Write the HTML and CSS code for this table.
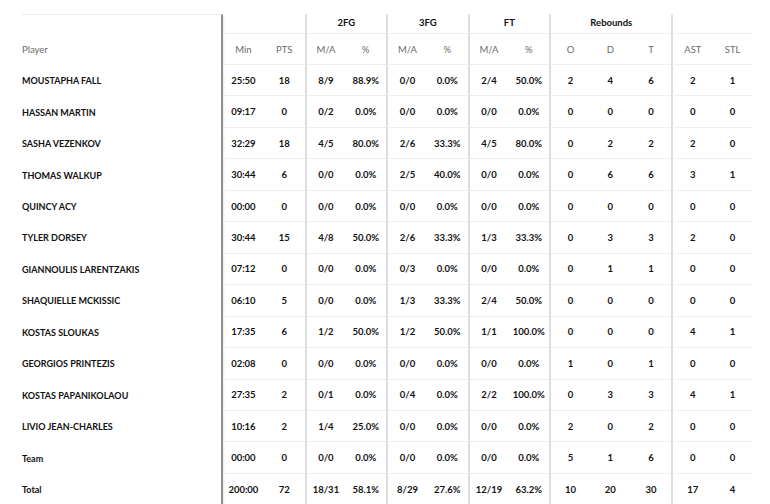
FILE: index.html
```html
<!DOCTYPE html>
<html>
<head>
<meta charset="utf-8">
<link rel="stylesheet" href="styles.css">
</head>
<body>
<table class="box">
  <colgroup>
    <col class="c-player">
    <col span="13" class="c-stat">
  </colgroup>
  <thead>
    <tr class="r-group">
      <th class="player top"></th>
      <th colspan="2"></th>
      <th colspan="2" class="sep grp">2FG</th>
      <th colspan="2" class="sep grp">3FG</th>
      <th colspan="2" class="sep grp">FT</th>
      <th colspan="3" class="sep grp">Rebounds</th>
      <th colspan="2" class="sep"></th>
    </tr>
    <tr class="r-head">
      <th class="player lab">Player</th>
      <th class="lab">Min</th><th class="lab">PTS</th>
      <th class="lab sep">M/A</th><th class="lab">%</th>
      <th class="lab sep">M/A</th><th class="lab">%</th>
      <th class="lab sep">M/A</th><th class="lab">%</th>
      <th class="lab sep">O</th><th class="lab">D</th><th class="lab">T</th>
      <th class="lab sep">AST</th><th class="lab">STL</th>
    </tr>
  </thead>
  <tbody>
    <tr><td class="player">MOUSTAPHA FALL</td><td>25:50</td><td>18</td><td class="sep">8/9</td><td>88.9%</td><td class="sep">0/0</td><td>0.0%</td><td class="sep">2/4</td><td>50.0%</td><td class="sep">2</td><td>4</td><td>6</td><td class="sep">2</td><td>1</td></tr>
    <tr><td class="player">HASSAN MARTIN</td><td>09:17</td><td>0</td><td class="sep">0/2</td><td>0.0%</td><td class="sep">0/0</td><td>0.0%</td><td class="sep">0/0</td><td>0.0%</td><td class="sep">0</td><td>0</td><td>0</td><td class="sep">0</td><td>0</td></tr>
    <tr><td class="player">SASHA VEZENKOV</td><td>32:29</td><td>18</td><td class="sep">4/5</td><td>80.0%</td><td class="sep">2/6</td><td>33.3%</td><td class="sep">4/5</td><td>80.0%</td><td class="sep">0</td><td>2</td><td>2</td><td class="sep">2</td><td>0</td></tr>
    <tr><td class="player">THOMAS WALKUP</td><td>30:44</td><td>6</td><td class="sep">0/0</td><td>0.0%</td><td class="sep">2/5</td><td>40.0%</td><td class="sep">0/0</td><td>0.0%</td><td class="sep">0</td><td>6</td><td>6</td><td class="sep">3</td><td>1</td></tr>
    <tr><td class="player">QUINCY ACY</td><td>00:00</td><td>0</td><td class="sep">0/0</td><td>0.0%</td><td class="sep">0/0</td><td>0.0%</td><td class="sep">0/0</td><td>0.0%</td><td class="sep">0</td><td>0</td><td>0</td><td class="sep">0</td><td>0</td></tr>
    <tr><td class="player">TYLER DORSEY</td><td>30:44</td><td>15</td><td class="sep">4/8</td><td>50.0%</td><td class="sep">2/6</td><td>33.3%</td><td class="sep">1/3</td><td>33.3%</td><td class="sep">0</td><td>3</td><td>3</td><td class="sep">2</td><td>0</td></tr>
    <tr><td class="player">GIANNOULIS LARENTZAKIS</td><td>07:12</td><td>0</td><td class="sep">0/0</td><td>0.0%</td><td class="sep">0/3</td><td>0.0%</td><td class="sep">0/0</td><td>0.0%</td><td class="sep">0</td><td>1</td><td>1</td><td class="sep">0</td><td>0</td></tr>
    <tr><td class="player">SHAQUIELLE MCKISSIC</td><td>06:10</td><td>5</td><td class="sep">0/0</td><td>0.0%</td><td class="sep">1/3</td><td>33.3%</td><td class="sep">2/4</td><td>50.0%</td><td class="sep">0</td><td>0</td><td>0</td><td class="sep">0</td><td>0</td></tr>
    <tr><td class="player">KOSTAS SLOUKAS</td><td>17:35</td><td>6</td><td class="sep">1/2</td><td>50.0%</td><td class="sep">1/2</td><td>50.0%</td><td class="sep">1/1</td><td>100.0%</td><td class="sep">0</td><td>0</td><td>0</td><td class="sep">4</td><td>1</td></tr>
    <tr><td class="player">GEORGIOS PRINTEZIS</td><td>02:08</td><td>0</td><td class="sep">0/0</td><td>0.0%</td><td class="sep">0/0</td><td>0.0%</td><td class="sep">0/0</td><td>0.0%</td><td class="sep">1</td><td>0</td><td>1</td><td class="sep">0</td><td>0</td></tr>
    <tr><td class="player">KOSTAS PAPANIKOLAOU</td><td>27:35</td><td>2</td><td class="sep">0/1</td><td>0.0%</td><td class="sep">0/4</td><td>0.0%</td><td class="sep">2/2</td><td>100.0%</td><td class="sep">0</td><td>3</td><td>3</td><td class="sep">4</td><td>1</td></tr>
    <tr><td class="player">LIVIO JEAN-CHARLES</td><td>10:16</td><td>2</td><td class="sep">1/4</td><td>25.0%</td><td class="sep">0/0</td><td>0.0%</td><td class="sep">0/0</td><td>0.0%</td><td class="sep">2</td><td>0</td><td>2</td><td class="sep">0</td><td>0</td></tr>
    <tr><td class="player">Team</td><td>00:00</td><td>0</td><td class="sep">0/0</td><td>0.0%</td><td class="sep">0/0</td><td>0.0%</td><td class="sep">0/0</td><td>0.0%</td><td class="sep">5</td><td>1</td><td>6</td><td class="sep">0</td><td>0</td></tr>
    <tr><td class="player">Total</td><td>200:00</td><td>72</td><td class="sep">18/31</td><td>58.1%</td><td class="sep">8/29</td><td>27.6%</td><td class="sep">12/19</td><td>63.2%</td><td class="sep">10</td><td>20</td><td>30</td><td class="sep">17</td><td>4</td></tr>
  </tbody>
</table>
</body>
</html>
```

FILE: styles.css
```css
html, body {
  margin: 0;
  padding: 0;
  background: #ffffff;
}
body {
  font-family: Lato, "Open Sans", sans-serif;
  color: #111111;
  overflow: hidden;
}
.box {
  margin: 14px 0 0 22px;
  width: 731px;
  table-layout: fixed;
  border-collapse: separate;
  border-spacing: 0;
}
.c-player { width: 201px; }
th, td {
  padding: 0;
  text-align: center;
  vertical-align: middle;
  font-size: 9.5px;
  font-weight: 700;
  white-space: nowrap;
  border-bottom: 1px solid #efefef;
}
.r-group { height: 20px; }
.r-head { height: 31px; }
tbody tr { height: 31.46px; }
.grp {
  font-weight: 700;
  color: #111;
  padding-bottom: 2px;
}
.lab {
  font-weight: 400;
  color: #6b6b6b;
}
.player {
  text-align: left;
  font-size: 9px;
  border-bottom: none;
  border-right: 2px solid #8e8e8e;
  box-shadow: 2px 0 2px -1px rgba(0,0,0,0.08);
}
.player.lab {
  font-size: 9.5px;
}
.player.top {
  border-top: 1px solid #ececec;
}
.sep {
  border-left: 2px solid #dedede;
}
```
